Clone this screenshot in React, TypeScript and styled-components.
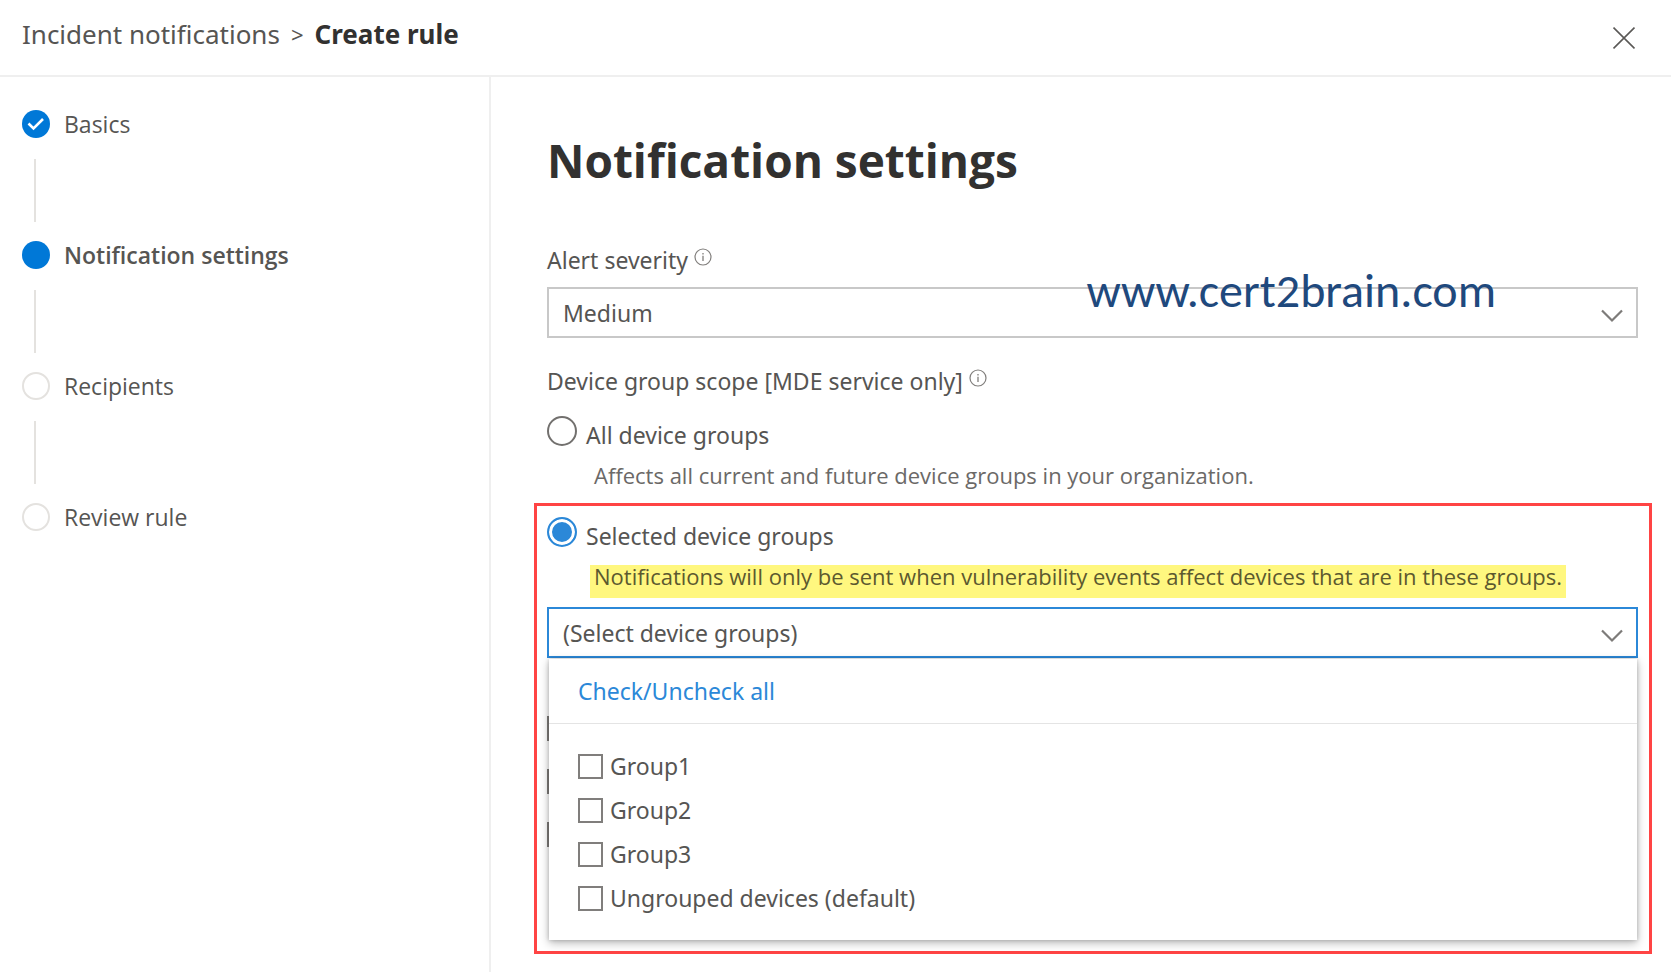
import React, { useState } from 'react';
import styled, { createGlobalStyle, css } from 'styled-components';

const color = {
  text: '#565553',
  subtle: '#6b6967',
  strong: '#323130',
  line: '#efefef',
  track: '#e4e2df',
  border: '#c8c8c8',
  brand: '#0078d7',
  accent: '#2b88d8',
  callout: '#ff4444',
  marker: '#fff77f',
};

const font = {
  body: "'Noto Sans', 'Open Sans', sans-serif",
  compact: "'Open Sans', 'Noto Sans', sans-serif",
};

const GlobalStyle = createGlobalStyle`
  *, *::before, *::after { box-sizing: border-box; }
  body {
    margin: 0;
    background: #fff;
    color: ${color.text};
    font-family: ${font.body};
    font-size: 23px;
    line-height: 32px;
  }
  button, select, input { font: inherit; color: inherit; margin: 0; }
`;

const Panel = styled.div`
  display: flex;
  flex-direction: column;
  min-height: 100vh;
`;

const Header = styled.header`
  display: flex;
  align-items: flex-start;
  justify-content: space-between;
  padding: 15px 31px 22px 22px;
  border-bottom: 2px solid ${color.line};
`;

const Breadcrumb = styled.nav`
  display: flex;
  gap: 11px;
  font-size: 26px;
  line-height: 38px;
`;

const CrumbLink = styled.a`
  color: ${color.text};
  text-decoration: none;
`;

const CrumbSeparator = styled.span`
  font-size: 22px;
`;

const CrumbCurrent = styled.span`
  color: ${color.strong};
  font-weight: 700;
`;

const CloseButton = styled.button`
  display: flex;
  margin-top: 8px;
  padding: 0 5px;
  border: 0;
  background: none;
  cursor: pointer;
`;

const Body = styled.div`
  display: flex;
  flex: 1;
`;

const Sidebar = styled.aside`
  flex: 0 0 491px;
  padding: 33px 22px;
  border-right: 2px solid ${color.line};
  font-family: ${font.compact};
`;

const Steps = styled.ol`
  margin: 0;
  padding: 0;
  list-style: none;
`;

const Step = styled.li<{ $current?: boolean }>`
  font-weight: ${(p) => (p.$current ? 600 : 400)};

  &:not(:last-child)::after {
    content: '';
    display: block;
    width: 2px;
    height: 63px;
    margin: 21px 0 19px 12px;
    background: ${color.track};
  }
`;

const StepRow = styled.div`
  display: flex;
  align-items: center;
  gap: 14px;
  height: 28px;
`;

const StepDot = styled.span<{ $filled: boolean }>`
  display: flex;
  align-items: center;
  justify-content: center;
  width: 28px;
  height: 28px;
  border-radius: 50%;
  ${(p) =>
    p.$filled
      ? css`background: ${color.brand};`
      : css`border: 2px solid ${color.track};`}
`;

const Main = styled.main`
  flex: 1;
  min-width: 0;
  padding: 53px 33px 18px 56px;
`;

const Title = styled.h1`
  margin: 0 0 54px;
  color: ${color.strong};
  font-family: ${font.compact};
  font-size: 46px;
  font-weight: 700;
  line-height: 60px;
`;

const Field = styled.div`
  position: relative;
  margin-bottom: 27px;
`;

const FieldLabel = styled.div`
  display: flex;
  align-items: flex-start;
  gap: 6px;
`;

const InfoMark = styled.svg`
  margin-top: 4px;
`;

const SelectBox = styled.div`
  position: relative;
`;

const Select = styled.select<{ $active?: boolean }>`
  display: block;
  width: 100%;
  height: 51px;
  padding: 0 48px 0 14px;
  appearance: none;
  border: 2px solid ${(p) => (p.$active ? color.accent : color.border)};
  border-radius: 0;
  background: #fff;
  outline: none;
`;

const SelectField = styled(SelectBox)`
  margin-top: 11px;
`;

const Chevron = styled.svg`
  position: absolute;
  top: 22px;
  right: 14px;
  pointer-events: none;
`;

const Watermark = styled.span`
  position: absolute;
  top: 22px;
  right: 142px;
  color: #1f497d;
  font-family: Carlito, Lato, sans-serif;
  font-size: 48px;
  line-height: 50px;
  pointer-events: none;
`;

const RadioOption = styled.div`
  display: flex;
  flex-direction: column;
  align-items: flex-start;
  gap: 14px;
`;

const RadioLabel = styled.label`
  display: flex;
  align-items: flex-start;
  gap: 9px;
`;

const RadioText = styled.span`
  padding-top: 4px;
  line-height: 30px;
`;

const Radio = styled.input`
  width: 30px;
  height: 30px;
  appearance: none;
  border: 2px solid #72706e;
  border-radius: 50%;
  background: #fff;

  &:checked {
    border-color: ${color.accent};
    background: ${color.accent};
    box-shadow: inset 0 0 0 3px #fff;
  }
`;

const Hint = styled.div<{ $marked?: boolean }>`
  margin-left: 43px;
  padding: 0 4px 11px;
  color: ${(p) => (p.$marked ? '#5c592f' : color.subtle)};
  font-family: ${font.compact};
  font-size: 22px;
  line-height: 22px;
  background: ${(p) => (p.$marked ? color.marker : 'transparent')};
`;

const RadioGroup = styled.div`
  margin-top: 19px;
`;

const Callout = styled.section`
  margin: 6px -14px 0 -13px;
  padding: 11px 11px 0 10px;
  border: 3px solid ${color.callout};
`;

const GroupPicker = styled(SelectBox)`
  margin-top: 9px;
`;

const Menu = styled.div`
  position: absolute;
  top: 100%;
  left: 2px;
  right: 1px;
  margin-top: 1px;
  background: #fff;
  box-shadow: 0 0 4px rgba(0, 0, 0, 0.2), 0 3px 9px rgba(0, 0, 0, 0.28);
`;

const MenuHeader = styled.div`
  padding: 16px 29px;
  border-bottom: 1px solid #e4e4e4;
`;

const ToggleAll = styled.button`
  display: block;
  padding: 0;
  border: 0;
  background: none;
  color: ${color.accent};
  line-height: 32px;
  cursor: pointer;
`;

const MenuList = styled.div`
  display: flex;
  flex-direction: column;
  gap: 20px;
  padding: 30px 29px 30px;
`;

const Check = styled.label`
  display: flex;
  align-items: center;
  gap: 7px;
  height: 24px;
  line-height: 24px;
`;

const Checkbox = styled.input`
  display: block;
  flex: none;
  width: 25px;
  height: 25px;
  appearance: none;
  border: 2px solid #807e7c;
  background: #fff;

  &:checked {
    border-color: ${color.accent};
    background: ${color.accent};
  }
`;

const OptionList = styled.div`
  display: flex;
  flex-direction: column;
  gap: 28px;
  padding: 58px 0 104px;
`;

const Info = () => (
  <InfoMark width="18" height="18" viewBox="0 0 18 18" fill="none" stroke="#807e7c" aria-hidden="true">
    <circle cx="9" cy="9" r="8" strokeWidth="1.2" />
    <path d="M9 7.8V13M9 5V6.4" strokeWidth="1.3" />
  </InfoMark>
);

const ChevronDown = () => (
  <Chevron width="24" height="14" viewBox="0 0 24 14" fill="none" stroke="#7d7b79" strokeWidth="2.2" aria-hidden="true">
    <path d="M2 1.5L12 11.5L22 1.5" />
  </Chevron>
);

const steps = [
  { name: 'Basics', state: 'done' },
  { name: 'Notification settings', state: 'current' },
  { name: 'Recipients', state: 'todo' },
  { name: 'Review rule', state: 'todo' },
];

const groups = ['Group1', 'Group2', 'Group3', 'Ungrouped devices (default)'];

export default function App() {
  const [scope, setScope] = useState('selected');
  const [checked, setChecked] = useState<string[]>([]);

  const toggle = (name: string) =>
    setChecked((list) => (list.includes(name) ? list.filter((g) => g !== name) : [...list, name]));

  return (
    <Panel>
      <GlobalStyle />
      <Header>
        <Breadcrumb aria-label="Breadcrumb">
          <CrumbLink href="#incidents">Incident notifications</CrumbLink>
          <CrumbSeparator>&gt;</CrumbSeparator>
          <CrumbCurrent>Create rule</CrumbCurrent>
        </Breadcrumb>
        <CloseButton type="button" aria-label="Close">
          <svg width="22" height="30" viewBox="0 0 22 30" fill="none" stroke="#5a5856" strokeWidth="1.7">
            <path d="M0.5 4.5L21.5 25.5M21.5 4.5L0.5 25.5" />
          </svg>
        </CloseButton>
      </Header>
      <Body>
        <Sidebar>
          <Steps>
            {steps.map((s) => (
              <Step key={s.name} $current={s.state === 'current'}>
                <StepRow>
                  <StepDot $filled={s.state !== 'todo'}>
                    {s.state === 'done' && (
                      <svg width="18" height="16" viewBox="0 0 18 16" fill="none" stroke="#fff" strokeWidth="2.6">
                        <path d="M1.5 7.5L6.5 12.5L16 3" />
                      </svg>
                    )}
                  </StepDot>
                  {s.name}
                </StepRow>
              </Step>
            ))}
          </Steps>
        </Sidebar>
        <Main>
          <Title>Notification settings</Title>
          <Field>
            <FieldLabel>
              <label htmlFor="severity">Alert severity</label>
              <Info />
            </FieldLabel>
            <SelectField>
              <Select id="severity">
                <option>Medium</option>
              </Select>
              <ChevronDown />
            </SelectField>
            <Watermark>www.cert2brain.com</Watermark>
          </Field>
          <FieldLabel>
            <span id="scope-label">Device group scope [MDE service only]</span>
            <Info />
          </FieldLabel>
          <RadioGroup role="radiogroup" aria-labelledby="scope-label">
            <RadioOption>
              <RadioLabel>
                <Radio type="radio" name="scope" checked={scope === 'all'} onChange={() => setScope('all')} />
                <RadioText>All device groups</RadioText>
              </RadioLabel>
              <Hint>Affects all current and future device groups in your organization.</Hint>
            </RadioOption>
            <Callout>
              <RadioOption>
                <RadioLabel>
                  <Radio type="radio" name="scope" checked={scope === 'selected'} onChange={() => setScope('selected')} />
                  <RadioText>Selected device groups</RadioText>
                </RadioLabel>
                <Hint $marked>
                  Notifications will only be sent when vulnerability events affect devices that are in these groups.
                </Hint>
              </RadioOption>
              <GroupPicker>
                <Select $active aria-label="Device groups">
                  <option>(Select device groups)</option>
                </Select>
                <ChevronDown />
                <Menu>
                  <MenuHeader>
                    <ToggleAll type="button" onClick={() => setChecked(checked.length ? [] : groups)}>
                      Check/Uncheck all
                    </ToggleAll>
                  </MenuHeader>
                  <MenuList>
                    {groups.map((g) => (
                      <Check key={g}>
                        <Checkbox type="checkbox" checked={checked.includes(g)} onChange={() => toggle(g)} />
                        {g}
                      </Check>
                    ))}
                  </MenuList>
                </Menu>
              </GroupPicker>
              <OptionList>
                <Checkbox type="checkbox" aria-label="First option" />
                <Checkbox type="checkbox" aria-label="Second option" />
                <Checkbox type="checkbox" aria-label="Third option" />
              </OptionList>
            </Callout>
          </RadioGroup>
        </Main>
      </Body>
    </Panel>
  );
}
